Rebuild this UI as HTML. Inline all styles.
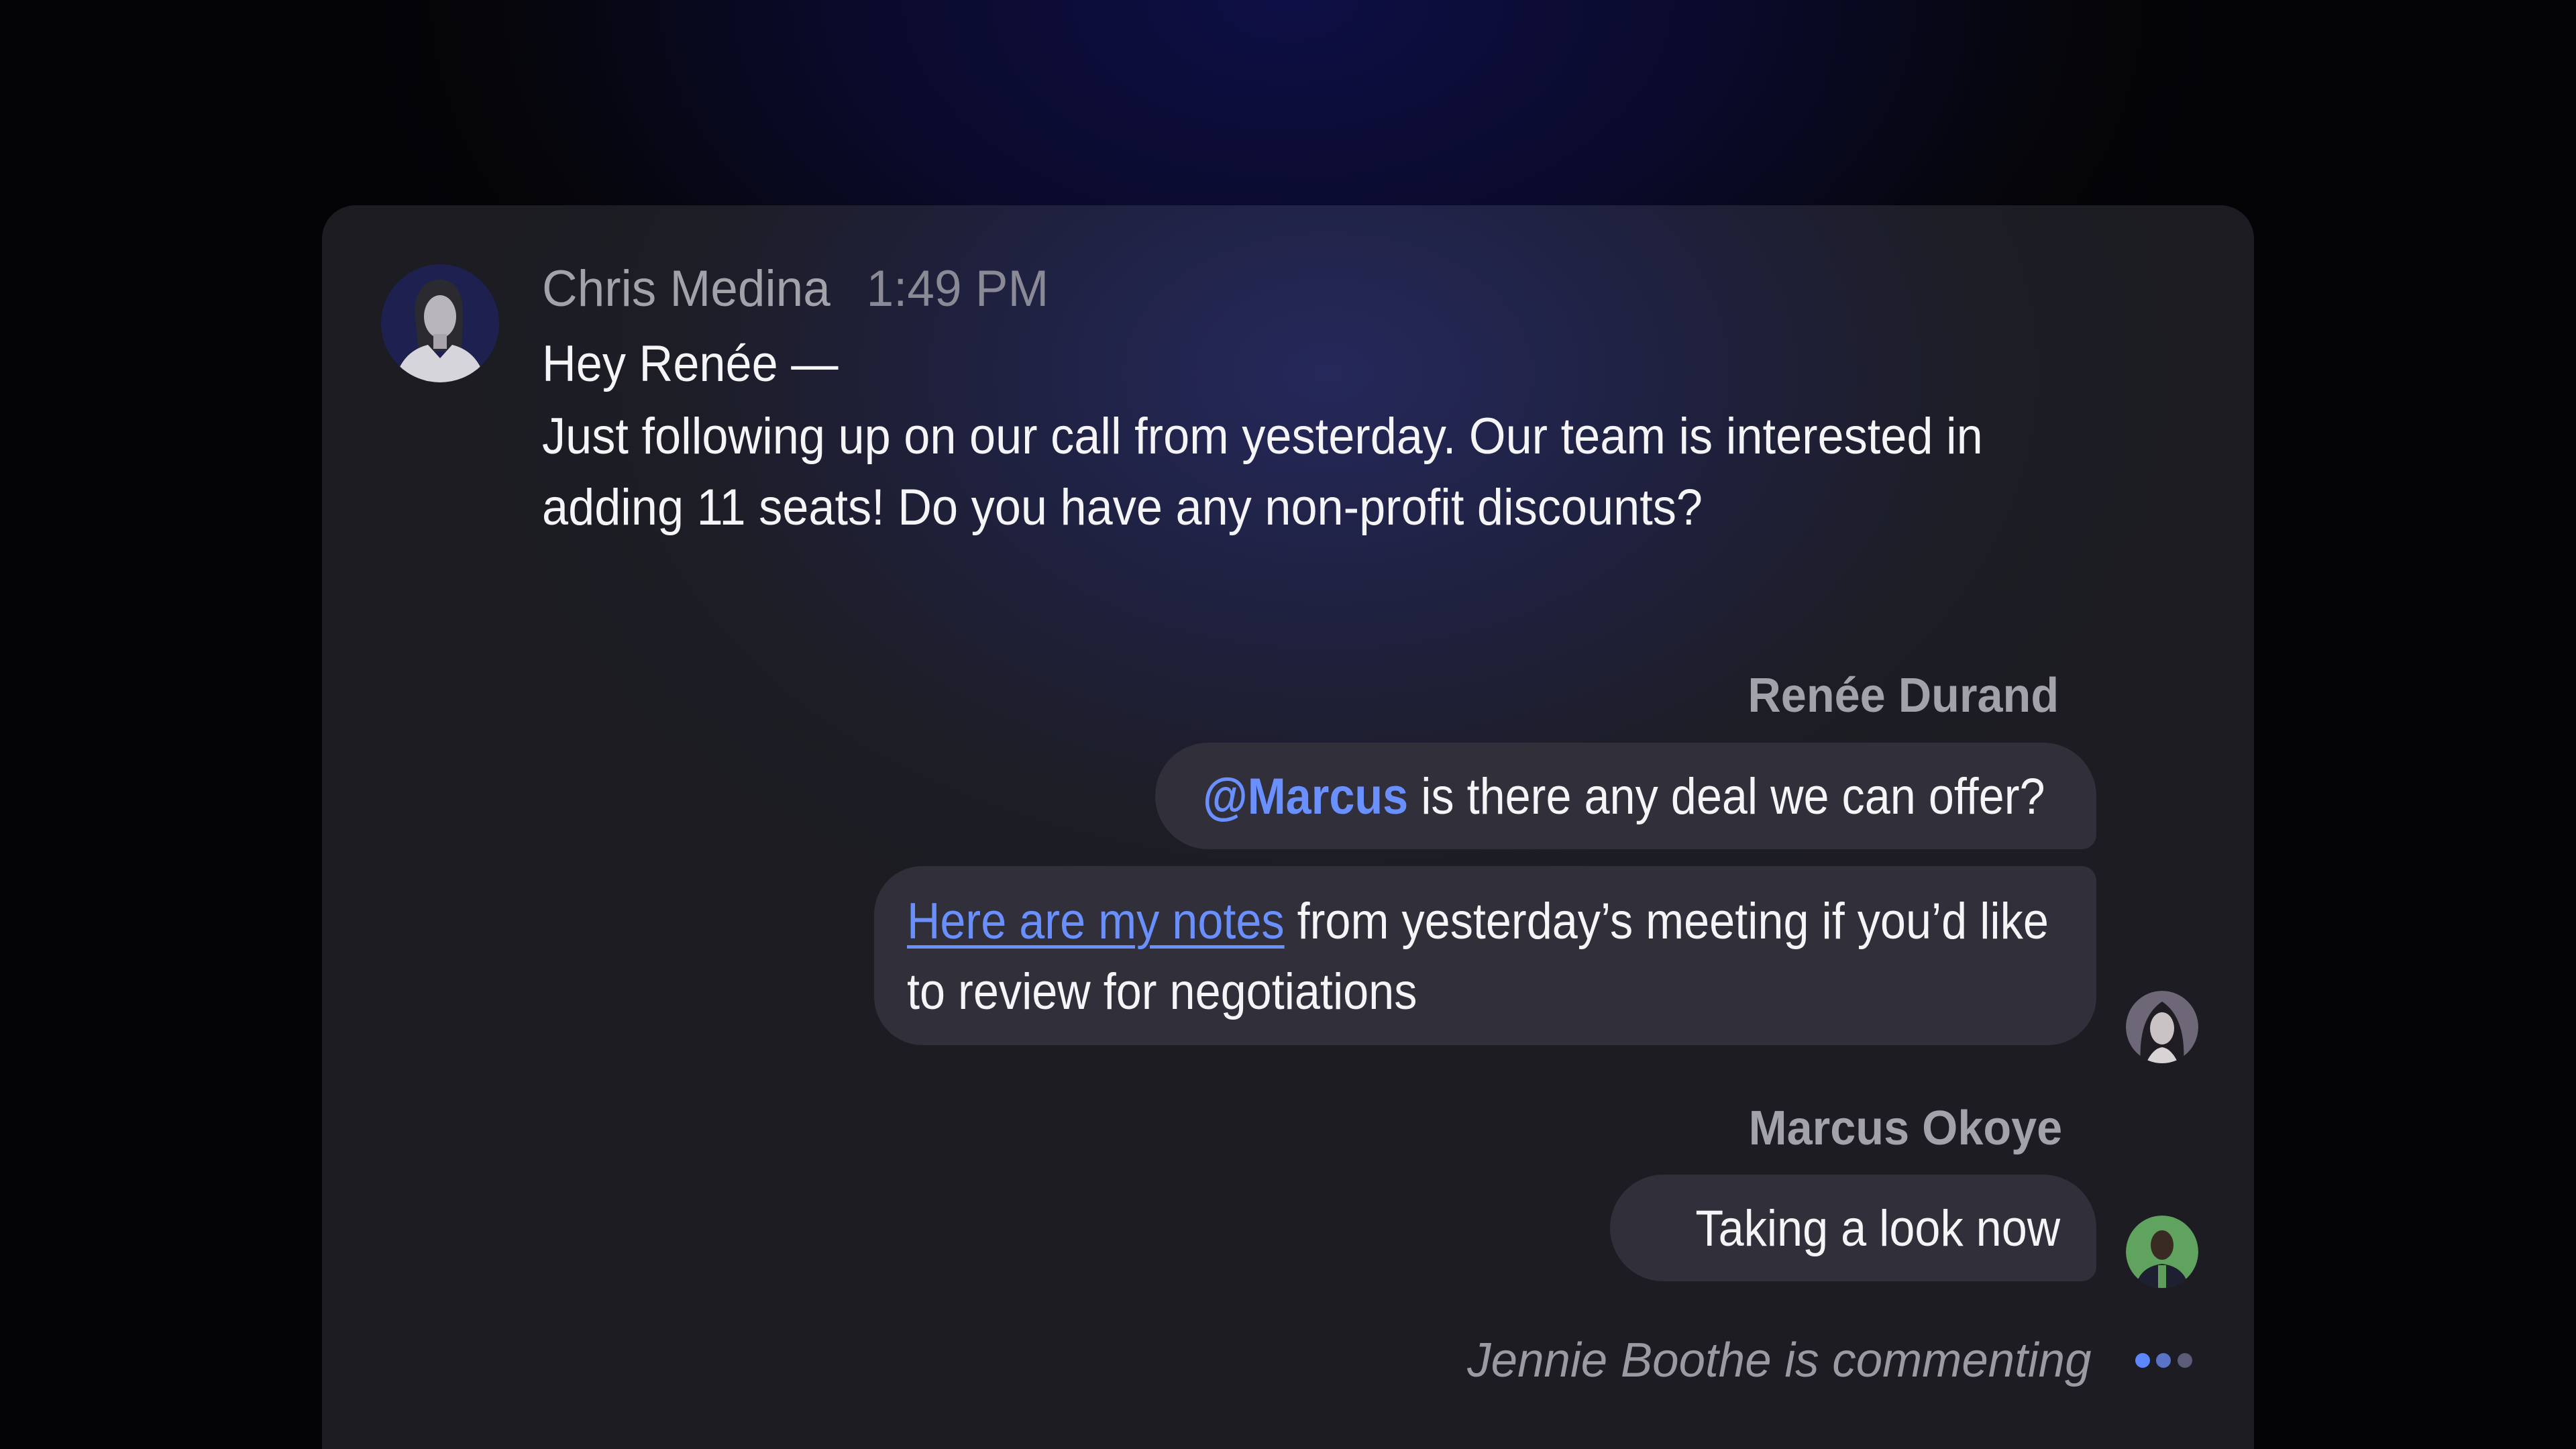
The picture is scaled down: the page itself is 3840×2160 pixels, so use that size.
<!DOCTYPE html>
<html><head><meta charset="utf-8"><style>
html,body{margin:0;padding:0;width:3840px;height:2160px;overflow:hidden}
body{position:relative;font-family:"Liberation Sans",sans-serif;
background:radial-gradient(ellipse 1500px 900px at 1920px 0px,#0e0f45 0%,#0a0a2a 45%,#050509 80%,#040406 100%);}
.card{position:absolute;left:480px;top:306px;width:2880px;height:1854px;border-radius:50px 50px 0 0;
background:radial-gradient(ellipse 1300px 900px at 1500px 250px,#25285a 0%,#1f2140 40%,#1d1d26 75%,#1c1c22 100%);}
.abs{position:absolute;white-space:nowrap}
.t{display:inline-block;transform:scaleX(.925);transform-origin:left center}
.tr{display:inline-block;transform:scaleX(.9);transform-origin:right center}
.name{color:#a2a2aa;font-size:76px;}
.body{color:#f5f5f7;font-size:76px;}
.bub{position:absolute;background:#302f3a;}
.link{color:#6a90ff}
.av{position:absolute;border-radius:50%;overflow:hidden}
</style></head><body>
<div class="card"></div>

<svg class="av" style="left:568px;top:394px" width="176" height="176" viewBox="0 0 176 176">
<circle cx="88" cy="88" r="88" fill="#1e2150"/>
<path d="M50 70 Q52 25 88 22 Q124 25 122 80 L120 130 L56 130 Z" fill="#2a2a30"/>
<ellipse cx="88" cy="78" rx="24" ry="32" fill="#b8b6bc"/>
<path d="M20 176 Q30 130 70 120 L88 140 L106 120 Q146 130 156 176 Z" fill="#d6d5dc"/>
<rect x="78" y="104" width="20" height="22" fill="#a8a6ac"/>
</svg>

<div class="abs name" style="left:808px;top:387px"><span class="t" style="transform:scaleX(.96)">Chris Medina<span style="color:#8a8a96;margin-left:56px">1:49 PM</span></span></div>
<div class="abs body" style="left:808px;top:499px"><span class="t">Hey Renée —</span></div>
<div class="abs body" style="left:808px;top:607px"><span class="t">Just following up on our call from yesterday. Our team is interested in</span></div>
<div class="abs body" style="left:808px;top:713px"><span class="t">adding 11 seats! Do you have any non-profit discounts?</span></div>

<div class="abs name" style="right:771px;top:992px"><span class="tr" style="font-weight:bold;font-size:72px;transform:scaleX(.95)">Renée Durand</span></div>

<div class="bub" style="left:1722px;top:1107px;width:1403px;height:159px;border-radius:80px 80px 22px 80px"></div>
<div class="abs body" style="left:1793px;top:1144px"><span class="t" style="transform:scaleX(.9)"><b class="link">@Marcus</b> is there any deal we can offer?</span></div>

<div class="bub" style="left:1303px;top:1291px;width:1822px;height:267px;border-radius:72px 22px 72px 72px"></div>
<div class="abs body" style="left:1352px;top:1330px"><span class="t" style="transform:scaleX(.9)"><span class="link" style="text-decoration:underline;text-decoration-thickness:5px;text-underline-offset:10px">Here are my notes</span> from yesterday’s meeting if you’d like</span></div>
<div class="abs body" style="left:1352px;top:1435px"><span class="t" style="transform:scaleX(.9)">to review for negotiations</span></div>

<svg class="av" style="left:3169px;top:1477px" width="108" height="108" viewBox="0 0 108 108">
<circle cx="54" cy="54" r="54" fill="#6e6778"/>
<path d="M22 108 Q18 40 54 16 Q90 40 86 108 Z" fill="#1f1c22"/>
<ellipse cx="54" cy="56" rx="18" ry="24" fill="#c9c3c6"/>
<path d="M30 108 Q40 86 54 84 Q68 86 78 108 Z" fill="#d8d4d6"/>
</svg>

<div class="abs name" style="right:766px;top:1637px"><span class="tr" style="font-weight:bold;font-size:72px;transform:scaleX(.95)">Marcus Okoye</span></div>

<div class="bub" style="left:2400px;top:1751px;width:725px;height:159px;border-radius:80px 80px 22px 80px"></div>
<div class="abs body" style="right:769px;top:1788px"><span class="tr">Taking a look now</span></div>

<svg class="av" style="left:3169px;top:1812px" width="108" height="108" viewBox="0 0 108 108">
<circle cx="54" cy="54" r="54" fill="#5fa35f"/>
<ellipse cx="54" cy="44" rx="17" ry="22" fill="#3a2a24"/>
<path d="M14 108 Q20 76 54 72 Q88 76 94 108 Z" fill="#1c2030"/>
<rect x="48" y="74" width="12" height="34" fill="#5e9e5a"/>
</svg>

<div class="abs" style="right:722px;top:1987px;color:#9a9aa2;font-size:72px;font-style:italic"><span class="tr" style="transform:scaleX(.985)">Jennie Boothe is commenting</span></div>
<div class="abs" style="left:3183px;top:2017px;width:22px;height:22px;border-radius:50%;background:#5b86ff"></div>
<div class="abs" style="left:3214px;top:2017px;width:22px;height:22px;border-radius:50%;background:#5a73c8"></div>
<div class="abs" style="left:3246px;top:2017px;width:22px;height:22px;border-radius:50%;background:#5a5c78"></div>
</body></html>
